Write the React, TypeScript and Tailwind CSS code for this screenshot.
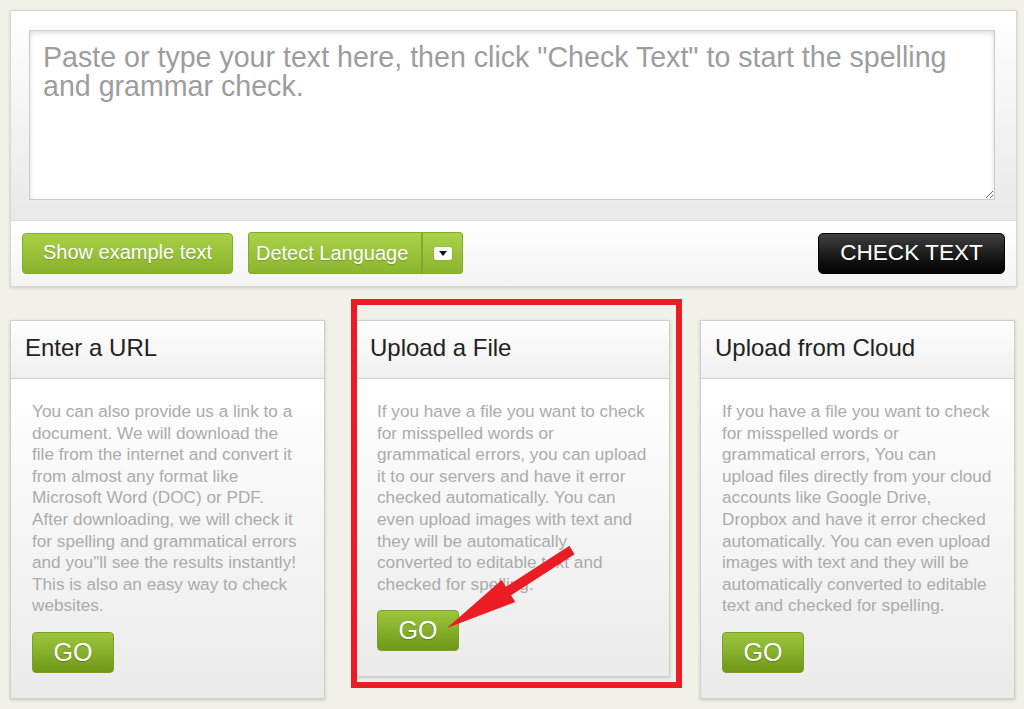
import React from 'react';

const font = { fontFamily: '"Liberation Sans", Arial, sans-serif' };

interface CardProps {
  title: string;
  text: string;
}

function Card({ title, text }: CardProps) {
  return (
    <div className="w-[315px] shrink-0 border border-[#cfcfcf] shadow-[0_1px_3px_rgba(0,0,0,0.18)]">
      <div className="h-[58px] border-b border-[#cdcdcd] bg-gradient-to-b from-white to-[#efefef] pl-[14px] pt-[13px]">
        <h2 className="text-[24px] leading-[28px] text-[#222]">{title}</h2>
      </div>
      <div className="bg-gradient-to-b from-white to-[#ebebeb] pl-[21px] pr-[22px] pt-[22px] pb-[25px]">
        <p className="text-[17.2px] leading-[21.6px] text-[#ababab]">{text}</p>
        <button className="mt-[15px] flex h-[41px] w-[82px] items-center justify-center rounded-[4px] border border-[#7c9f22] bg-gradient-to-b from-[#9dc63e] to-[#6f9816] text-[25px] text-white [text-shadow:0_1px_1px_rgba(0,0,0,0.25)]">
          GO
        </button>
      </div>
    </div>
  );
}

export default function App() {
  return (
    <div className="relative min-h-screen w-[1024px] bg-[#f1f0e9] px-[10px] pt-[10px] pb-[11px]" style={font}>
      {/* text input panel */}
      <div className="w-[1007px] border border-[#d6d6d6] bg-white shadow-[0_1px_3px_rgba(0,0,0,0.15)]">
        <div className="border-b border-[#d9d9d9] bg-gradient-to-b from-white to-[#e9e9e9] pl-[18px] pr-[21px] pt-[19px] pb-[20px]">
          <textarea
            className="block h-[170px] w-[966px] border border-[#cbcbcb] bg-white px-[13px] pt-[12px] text-[28.6px] leading-[29px] text-[#333] shadow-[inset_0_2px_5px_rgba(0,0,0,0.14)] outline-none placeholder:text-[#9d9d9d]"
            placeholder={'Paste or type your text here, then click "Check Text" to start the spelling and grammar check.'}
          />
        </div>
        <div className="flex items-center bg-gradient-to-b from-white to-[#f4f4f4] pl-[11px] pr-[11px] pt-[11px] pb-[12px]">
          <button className="flex h-[41px] w-[211px] items-center justify-center rounded-[4px] border border-[#84ab2a] bg-gradient-to-b from-[#a9d147] to-[#88b22a] pb-[2px] text-[20px] text-white [text-shadow:0_1px_1px_rgba(0,0,0,0.2)]">
            Show example text
          </button>
          <div className="ml-[15px] flex h-[42px] w-[215px] overflow-hidden rounded-[3px] border border-[#84ab2a] bg-gradient-to-b from-[#abd24a] to-[#8ab52c]">
            <div className="flex flex-1 items-center pl-[7px] text-[20px] text-white [text-shadow:0_1px_1px_rgba(0,0,0,0.2)]">
              Detect Language
            </div>
            <div className="flex w-[41px] items-center justify-center border-l-2 border-[#82a82a]">
              <div className="flex h-[13px] w-[18px] items-center justify-center rounded-[2px] bg-white shadow-[0_0_1px_rgba(0,0,0,0.4)]">
                <svg width="8" height="5" viewBox="0 0 8 5">
                  <path d="M0 0h8L4 5z" fill="#111" />
                </svg>
              </div>
            </div>
          </div>
          <button className="ml-auto flex h-[41px] w-[187px] items-center justify-center rounded-[5px] border border-black bg-gradient-to-b from-[#404040] to-[#030303] text-[22.6px] text-white">
            CHECK TEXT
          </button>
        </div>
      </div>

      {/* option cards */}
      <div className="mt-[33px] flex items-start gap-[30px]">
        <Card
          title="Enter a URL"
          text={'You can also provide us a link to a document. We will download the file from the internet and convert it from almost any format like Microsoft Word (DOC) or PDF. After downloading, we will check it for spelling and grammatical errors and you"ll see the results instantly! This is also an easy way to check websites.'}
        />
        <Card
          title="Upload a File"
          text="If you have a file you want to check for misspelled words or grammatical errors, you can upload it to our servers and have it error checked automatically. You can even upload images with text and they will be automatically converted to editable text and checked for spelling."
        />
        <Card
          title="Upload from Cloud"
          text="If you have a file you want to check for misspelled words or grammatical errors, You can upload files directly from your cloud accounts like Google Drive, Dropbox and have it error checked automatically. You can even upload images with text and they will be automatically converted to editable text and checked for spelling."
        />
      </div>

      {/* annotation: red frame + arrow */}
      <div className="pointer-events-none absolute left-[351px] top-[299px] h-[389px] w-[331px] border-[6px] border-[#ec1c24]" />
      <svg className="pointer-events-none absolute left-0 top-0" width="1024" height="709" viewBox="0 0 1024 709">
        <polygon
          points="569.4,545.8 505.9,586.8 501.7,580.1 447,628 515.3,601.9 511.1,595.2 574.6,554.2"
          fill="#ec1c24"
        />
      </svg>
    </div>
  );
}
